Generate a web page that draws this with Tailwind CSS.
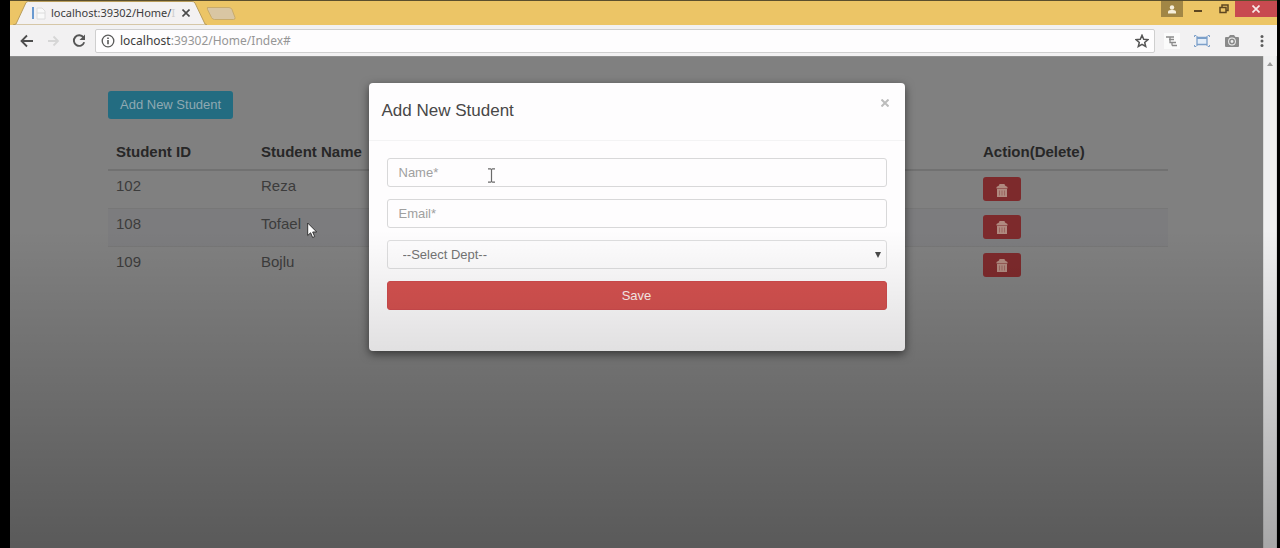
<!DOCTYPE html>
<html lang="en">
<head>
<meta charset="utf-8">
<meta name="viewport" content="width=device-width, initial-scale=1">
<title>localhost:39302/Home/Index</title>
<script src="https://cdn.jsdelivr.net/npm/@tailwindcss/browser@4"></script>
</head>
<body class="bg-black font-['Liberation_Sans',Arial,sans-serif]">
<div class="relative flex flex-col min-h-screen pl-[10px] pr-[3px] overflow-hidden">

  <!-- Tab strip -->
  <header class="relative flex h-[25px] bg-[#ecc566] border-t border-[#5b4f2d]">
    <svg class="absolute left-0 top-0 w-[240px] h-[24px]" viewBox="0 0 240 24" fill="none" aria-hidden="true">
      <path d="M3 24 6 23 16 1.500Q17 .5 18.500 .5H182q2 0 3 1.500L195 23l2 1z" fill="#f3f1f2" stroke="#b99d5c"/>
      <path d="M197 6.500h22q2 0 3 2l3 8q.5 2-1.500 2h-19q-2 0-3-2l-4-8q-.5-2 .5-2z" fill="#d9c6a3" stroke="#c8ab6b"/>
    </svg>
    <div class="relative flex items-center w-[197px] pl-[21px]">
      <svg class="w-[16px] h-[16px]" viewBox="0 0 16 16" fill="none" aria-hidden="true">
        <path d="M2 2v12" stroke="#6a9ad0" stroke-width="2"/>
        <path d="M6 3h5l3 3v8H6z" fill="#f9f9f9" stroke="#dcdcdc"/><path d="M6 8h8" stroke="#dcdcdc"/>
      </svg>
      <span class="ml-[4px] w-[125px] whitespace-nowrap font-['Noto_Sans',sans-serif] text-[11px] leading-[16px] text-[#3c3c3c]">localhost:39302/Home/<span class="text-[#cfcfcf]">I</span></span>
      <button type="button" aria-label="Close tab" class="ml-[4px] flex items-center justify-center w-[12px] h-[12px]">
        <svg class="w-[8px] h-[8px]" viewBox="0 0 8 8" stroke="#4a4a4a" stroke-width="1.600"><path d="M.5.5l7 7M7.500.5l-7 7"/></svg>
      </button>
    </div>
    <div class="ml-auto flex h-[16px]">
      <button type="button" aria-label="Profile" class="flex justify-center items-center w-[22px] bg-[#a18645]">
        <svg class="w-[10px] h-[9px]" viewBox="0 0 10 9" fill="#f6efdc"><circle cx="5" cy="2.500" r="2.200"/><path d="M1 8.500V7q0-2 3-2h2q3 0 3 2v1.500z"/></svg>
      </button>
      <button type="button" aria-label="Minimize" class="flex justify-center items-center w-[30px]">
        <svg class="w-[8px] h-[8px]" viewBox="0 0 8 8"><path d="M0 5h8v2H0z" fill="#5d4620"/></svg>
      </button>
      <button type="button" aria-label="Restore" class="flex justify-center items-center w-[22px]">
        <svg class="w-[10px] h-[10px]" viewBox="0 0 10 10" fill="none" stroke="#5d4620" stroke-width="1.500"><path d="M1 3.500h6v5H1zM3 3V1h6v5.500H7.500"/></svg>
      </button>
      <button type="button" aria-label="Close window" class="flex justify-center items-center w-[42px] bg-[#c84a50]">
        <svg class="w-[8px] h-[8px]" viewBox="0 0 8 8" stroke="#f8e8e8" stroke-width="1.700"><path d="M.5.5l7 7M7.500.5l-7 7"/></svg>
      </button>
    </div>
  </header>

  <!-- Toolbar -->
  <nav aria-label="Browser" class="flex items-center h-[31px] pl-[9px] pr-[7px] bg-[#f2f1f2]">
    <button type="button" aria-label="Back" class="w-[16px] h-[16px]">
      <svg viewBox="0 0 16 16" fill="none" stroke="#4d4d4d" stroke-width="1.800"><path d="M14 8H2.500M8 2.500 2.500 8 8 13.500"/></svg>
    </button>
    <button type="button" aria-label="Forward" class="ml-[10px] w-[16px] h-[16px]">
      <svg viewBox="0 0 16 16" fill="none" stroke="#d6d6d6" stroke-width="1.800"><path d="M3 8h10M8.500 3.500 13 8l-4.500 4.500"/></svg>
    </button>
    <button type="button" aria-label="Reload" class="ml-[10px] w-[16px] h-[16px]">
      <svg viewBox="0 0 16 16" fill="none" stroke="#555" stroke-width="1.900"><path d="M12.500 4.500A5.300 5.300 0 1 0 13.200 9.300"/><path d="M14 1.500V7H8.500z" fill="#555" stroke="none"/></svg>
    </button>
    <div class="ml-[8px] flex flex-1 items-center h-[24px] pl-[5px] pr-[5px] bg-[#fefdfe] border border-[#cfcfcf] rounded-[2px]">
      <svg class="w-[14px] h-[14px]" viewBox="0 0 14 14" fill="none" stroke="#5a5a5a" stroke-width="1.300" aria-hidden="true"><circle cx="7" cy="7" r="5.800"/><path d="M7 6v4.200M7 3.500v1.500" stroke-width="1.600"/></svg>
      <div role="textbox" aria-label="Address" class="ml-[5px] flex-1 font-['Noto_Sans',sans-serif] text-[12px] leading-[16px] text-[#969696]"><span class="text-[#3c3c3c]">localhost</span>:39302/Home/Index#</div>
      <button type="button" aria-label="Bookmark" class="w-[14px] h-[14px]">
        <svg viewBox="0 0 14 14" fill="none" stroke="#555" stroke-width="1.500"><path d="m7 1.300 1.700 3.900 4.200.4-3.200 2.800 1 4.100L7 10.300l-3.700 2.200 1-4.100L1.100 5.600l4.200-.4z"/></svg>
      </button>
    </div>
    <button type="button" aria-label="Outline extension" class="ml-[9px] w-[16px] h-[16px] bg-[#fbfbfb]">
      <svg viewBox="0 0 16 16" fill="none" stroke="#8b8b8b" stroke-width="1.300"><path d="M2 4h8M5 6.500h5M7 9.500h5M8 12.500h5M6 4v5.500h2v3"/></svg>
    </button>
    <button type="button" aria-label="Resize extension" class="ml-[14px] w-[16px] h-[16px]">
      <svg viewBox="0 0 16 16" fill="none" stroke="#7b9fc9"><path d="M3 4.500h10v7H3z" fill="#e3edf8" stroke-width="1.300"/><path d="M3 5h10" stroke-width="2"/><path d="M.5 4V2.500H2L3.500 4M15.500 4V2.500H14L12.500 4M.5 12v1.500H2L3.500 12M15.500 12v1.500H14L12.500 12"/></svg>
    </button>
    <button type="button" aria-label="Camera extension" class="ml-[14px] w-[16px] h-[16px]">
      <svg viewBox="0 0 16 16"><path d="M2 4h2.500L6 2h4l1.500 2H14q1 0 1 1v8q0 1-1 1H2q-1 0-1-1V5q0-1 1-1z" fill="#8a8a8a"/><circle cx="8" cy="8.500" r="3.900" fill="#eee"/><circle cx="8" cy="8.500" r="2.200" fill="none" stroke="#8a8a8a" stroke-width="1.500"/></svg>
    </button>
    <button type="button" aria-label="Menu" class="ml-[14px] w-[16px] h-[16px]">
      <svg viewBox="0 0 16 16" fill="#5c5c5c"><circle cx="8" cy="3.500" r="1.500"/><circle cx="8" cy="8" r="1.500"/><circle cx="8" cy="12.500" r="1.500"/></svg>
    </button>
  </nav>

  <!-- Page viewport -->
  <div class="relative flex flex-1">
    <main class="relative flex-1 bg-[#808080] border-t border-[#8e8e8e] pt-[34px] pl-[98px] pr-[95px]">
      <button type="button" class="block h-[28px] px-[12px] rounded-[3px] bg-[#236c81] text-[13px] leading-[16px] text-[#8fa9b2]">Add New Student</button>
      <table class="mt-[12px] w-full table-fixed border-collapse text-left text-[15px] leading-[18px] text-[#3c3c3c]">
        <colgroup><col class="w-[145px]"><col><col class="w-[193px]"></colgroup>
        <thead>
          <tr class="h-[39px] border-b-2 border-[#717171] text-[#272727]">
            <th scope="col" class="px-[8px] pt-[4px]">Student ID</th><th scope="col" class="px-[8px] pt-[4px]">Student Name</th><th scope="col" class="px-[8px] pt-[4px]">Action(Delete)</th>
          </tr>
        </thead>
        <tbody class="align-top">
          <tr class="h-[38px] border-b border-[#777]">
            <td class="px-[8px] pt-[6px]">102</td><td class="px-[8px] pt-[6px]">Reza</td>
            <td class="px-[8px] pt-[6px]"><button type="button" aria-label="Delete Reza" class="flex items-center justify-center w-[38px] h-[24px] rounded-[3px] bg-[#7d2a2c]"><svg class="mt-[2px] w-[12px] h-[13px]" viewBox="0 0 12 13" fill="#b08a80"><path d="M3.500 0h5L9 1.500 11.500 3v1.500H.5V3L3 1.500zM1 5h10v8H1z"/><path d="M3.500 6.500v5M6 6.500v5M8.500 6.500v5" stroke="#9b6660"/></svg></button></td>
          </tr>
          <tr class="h-[38px] border-b border-[#777] bg-[#7c7c7e]">
            <td class="px-[8px] pt-[6px]">108</td><td class="px-[8px] pt-[6px]">Tofael</td>
            <td class="px-[8px] pt-[6px]"><button type="button" aria-label="Delete Tofael" class="flex items-center justify-center w-[38px] h-[24px] rounded-[3px] bg-[#7d2a2c]"><svg class="mt-[2px] w-[12px] h-[13px]" viewBox="0 0 12 13" fill="#b08a80"><path d="M3.500 0h5L9 1.500 11.500 3v1.500H.5V3L3 1.500zM1 5h10v8H1z"/><path d="M3.500 6.500v5M6 6.500v5M8.500 6.500v5" stroke="#9b6660"/></svg></button></td>
          </tr>
          <tr class="h-[38px]">
            <td class="px-[8px] pt-[6px]">109</td><td class="px-[8px] pt-[6px]">Bojlu</td>
            <td class="px-[8px] pt-[6px]"><button type="button" aria-label="Delete Bojlu" class="flex items-center justify-center w-[38px] h-[24px] rounded-[3px] bg-[#7d2a2c]"><svg class="mt-[2px] w-[12px] h-[13px]" viewBox="0 0 12 13" fill="#b08a80"><path d="M3.500 0h5L9 1.500 11.500 3v1.500H.5V3L3 1.500zM1 5h10v8H1z"/><path d="M3.500 6.500v5M6 6.500v5M8.500 6.500v5" stroke="#9b6660"/></svg></button></td>
          </tr>
        </tbody>
      </table>

      <!-- Modal -->
      <div class="absolute inset-x-0 top-0 flex justify-center pt-[26px]">
        <section role="dialog" aria-labelledby="dialog-title" class="w-[536px] rounded-[4px] bg-[#fefdfe] shadow-[0_3px_10px_rgba(0,0,0,0.55)]">
          <div class="flex items-start justify-between h-[58px] pt-[13px] pl-[13px] pr-[15px] border-b border-[#f3f3f4]">
            <h1 id="dialog-title" class="mt-[4px] text-[17px] leading-[22px] text-[#484848]">Add New Student</h1>
            <button type="button" aria-label="Close" class="flex items-center justify-center w-[10px] h-[14px]"><svg class="w-[8px] h-[8px]" viewBox="0 0 8 8" stroke="#bcbcbc" stroke-width="2"><path d="M.5.5l7 7M7.500.5l-7 7"/></svg></button>
          </div>
          <form class="flex flex-col gap-[12px] px-[18px] pt-[17px] pb-[41px] text-[13px] leading-[16px]">
            <input type="text" aria-label="Name" placeholder="Name*" class="h-[29px] px-[11px] rounded-[3px] border border-[#d8d8d9] placeholder:text-[#a0a0a0]">
            <input type="email" aria-label="Email" placeholder="Email*" class="h-[29px] px-[11px] rounded-[3px] border border-[#d8d8d9] placeholder:text-[#a0a0a0]">
            <div class="relative flex">
              <select aria-label="Department" class="w-full h-[29px] pl-[15px] appearance-none rounded-[3px] border border-[#dededf] bg-[#fefdfe] text-[#747474]"><option>--Select Dept--</option></select>
              <svg class="absolute right-[6px] top-[12px] w-[6px] h-[6px] pointer-events-none" viewBox="0 0 6 6" aria-hidden="true"><path d="M0 0h6L3 6z" fill="#4a4a4a"/></svg>
            </div>
            <button type="submit" class="h-[29px] rounded-[3px] bg-[#d65250] border border-[#d04c4e] text-[#fff1ef]">Save</button>
          </form>
        </section>
      </div>

      <!-- Pointers -->
      <svg class="absolute left-[297px] top-[165px] w-[11px] h-[17px]" viewBox="0 0 11 17" aria-hidden="true"><path d="M.7 1v12.500l2.900-2.700 2 4.700 2.100-.9-2-4.600h4z" fill="#fff" stroke="#333"/></svg>
      <svg class="absolute left-[478px] top-[111px] w-[7px] h-[15px]" viewBox="0 0 7 15" fill="none" stroke="#6a6a6a" stroke-width="1.200" aria-hidden="true"><path d="M0 .8h2.500l1 .8 1-.8H7M0 14.200h2.500l1-.8 1 .8H7M3.500 1.500v12"/></svg>
    </main>
    <!-- Scrollbar track -->
    <div class="flex justify-center w-[14px] pt-[6px] bg-[#efeff0] border-x border-[#dadada]">
      <svg class="w-[6px] h-[4px]" viewBox="0 0 6 4" aria-hidden="true"><path d="M0 4 3 0l3 4z" fill="#9a9a9a"/></svg>
    </div>
  </div>

  <!-- Bottom shade -->
  <div class="absolute inset-x-0 bottom-0 h-[58%] bg-linear-to-b from-transparent to-black/30 pointer-events-none"></div>
</div>
</body>
</html>
